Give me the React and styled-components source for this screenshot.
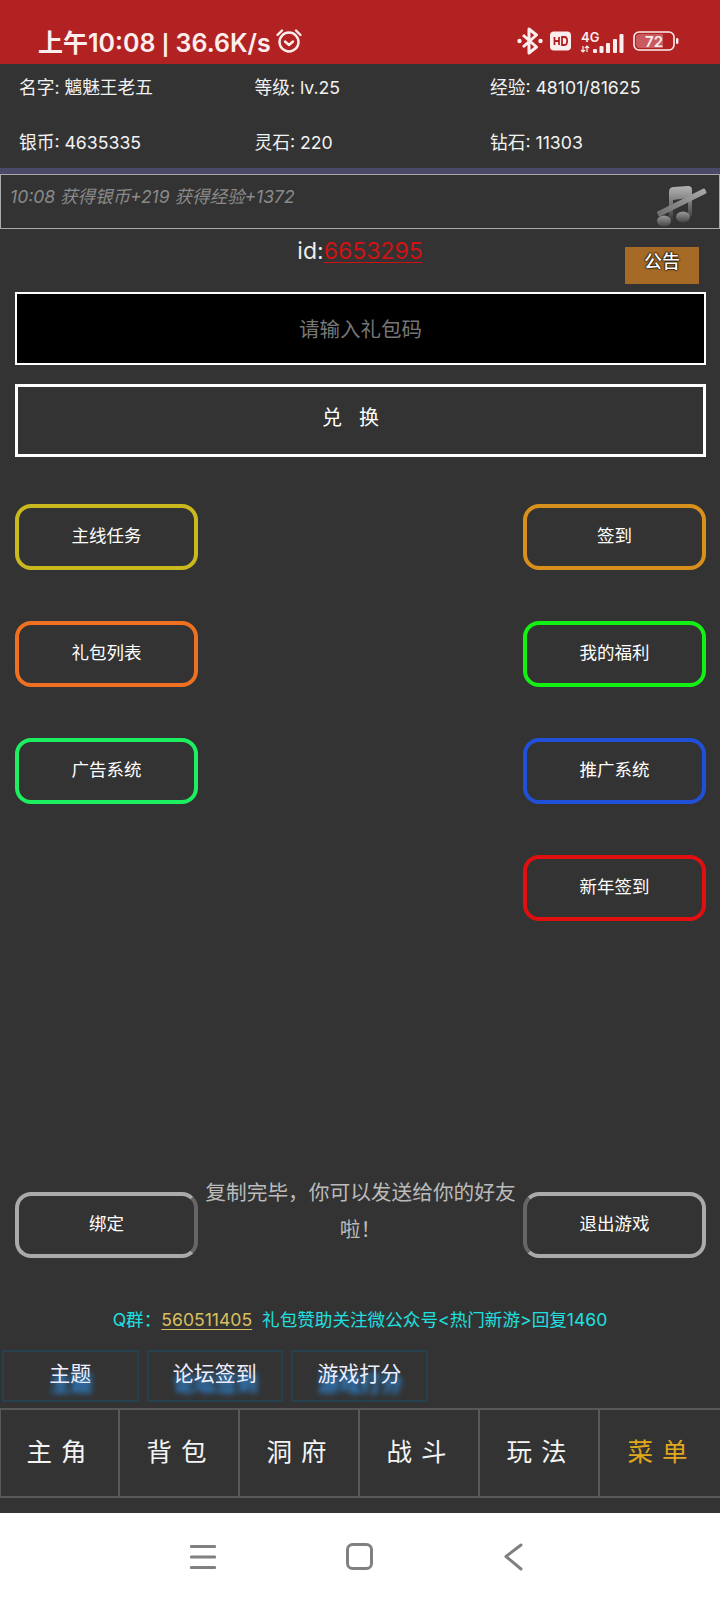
import React from 'react';
import styled, { createGlobalStyle } from 'styled-components';

const GlobalStyle = createGlobalStyle`
  html, body { margin: 0; padding: 0; background: #333; }
  * { box-sizing: border-box; }
  body { font-family: Inter, "Noto Sans CJK SC", sans-serif; }
`;

const Page = styled.div`
  width: 720px;
  height: 1600px;
  display: flex;
  flex-direction: column;
  background: #333;
  color: #fff;
  overflow: hidden;
`;

const StatusBar = styled.div`
  height: 64px;
  flex: none;
  background: #b22222;
  color: #fdeeee;
  display: flex;
  align-items: center;
  justify-content: space-between;
  padding: 18px 41px 0 38px;
`;

const StatusLeft = styled.div`
  display: flex;
  align-items: center;
  gap: 4px;
  font-size: 25px;
  font-weight: 600;
  white-space: pre;
`;

const StatusSep = styled.span`
  font-size: 20px;
  font-weight: 700;
`;

const StatusRight = styled.div`
  display: flex;
  align-items: center;
`;

const InfoGrid = styled.div`
  flex: none;
  height: 104px;
  display: grid;
  grid-template-columns: repeat(3, 235.5px);
  grid-auto-rows: 55px;
  padding: 0 0 0 19px;
  align-items: center;
  font-size: 17.7px;
  color: #f2f2f2;
`;

const InfoCell = styled.div`
  margin-top: -11px;
  white-space: nowrap;
`;

const Divider = styled.div`
  height: 6px;
  flex: none;
  background: #4a4a68;
`;

const LogBox = styled.div`
  flex: none;
  height: 55px;
  border: 1px solid #aaa;
  display: flex;
  align-items: flex-start;
  justify-content: space-between;
  padding: 8px 10px 0 9px;
  font-size: 17.5px;
  font-style: italic;
  color: #8a8a8a;
`;

const MusicSlot = styled.div`
  margin-top: 3px;
`;

const Notice = styled.div`
  position: relative;
  height: 63px;
  flex: none;
  padding-top: 7px;
  text-align: center;
  font-size: 23px;
  line-height: 30px;
  color: #eee;
`;

const NoticeId = styled.span`
  color: #d01212;
  text-decoration: underline;
  text-underline-offset: 3px;
  text-decoration-thickness: 1px;
`;

const NoticeBtn = styled.div`
  position: absolute;
  top: 18px;
  left: 625px;
  width: 74px;
  height: 37px;
  background: #a56a26;
  color: #fff;
  font-size: 18px;
  font-weight: 500;
  text-align: center;
  line-height: 30px;
  text-shadow: 0 0 2px #000, 0 0 2px #000, 0 0 1px #000;
`;

const CodeInput = styled.div`
  flex: none;
  height: 73px;
  margin: 0 14px 0 15px;
  padding-bottom: 2px;
  background: #000;
  border: 2px solid #fff;
  display: flex;
  align-items: center;
  justify-content: center;
  font-size: 20.5px;
  color: #777;
`;

const RedeemBtn = styled.div`
  flex: none;
  height: 73px;
  margin: 19px 14px 0 15px;
  padding: 0 20px 8px 0;
  border: 3px solid #fff;
  display: flex;
  align-items: center;
  justify-content: center;
  font-size: 20px;
  color: #fff;
  white-space: pre;
`;

const ActionGrid = styled.div`
  flex: none;
  display: grid;
  grid-template-columns: 183px 183px;
  justify-content: space-between;
  grid-auto-rows: 66px;
  row-gap: 51px;
  margin: 47px 14px 0 15px;
`;

const ActionBtn = styled.div`
  height: 66px;
  border: 4px solid ${p => p.$color};
  border-radius: 16px;
  padding-bottom: 5px;
  display: flex;
  align-items: center;
  justify-content: center;
  font-size: 17.5px;
  color: #fff;
  ${p => p.$right && 'grid-column: 2;'}
`;

const BottomRow = styled.div`
  flex: none;
  display: grid;
  grid-template-columns: 183px 1fr 183px;
  align-items: start;
  height: 72px;
  margin: 271px 14px 0 15px;
`;

const FadedBtn = styled(ActionBtn)`
  border-color: #aaa;
  ${p => (p.$side === 'left' ? 'border-right-color: #666;' : 'border-left-color: #666;')}
`;

const CopyMsg = styled.div`
  font-size: 20.7px;
  line-height: 37px;
  text-align: center;
  color: #bbb;
  padding: 0 3px;
  margin-top: -18px;
`;

const QLine = styled.div`
  flex: none;
  margin-top: 43px;
  height: 26px;
  font-size: 17.6px;
  line-height: 26px;
  text-align: center;
  color: #1ee0e0;
  white-space: pre;
`;

const QNum = styled.span`
  color: #d8c060;
  text-decoration: underline;
  text-underline-offset: 3px;
`;

const MiniTabs = styled.div`
  flex: none;
  display: flex;
  gap: 8px;
  margin-top: 17px;
  padding-left: 2px;
`;

const MiniTab = styled.div`
  width: 136.5px;
  height: 52px;
  border: 2px solid #26404f;
  display: flex;
  justify-content: center;
  padding-top: 8px;
  font-size: 21px;
  line-height: 28px;
  color: #eef;
  text-shadow: 1px 9px 5px #2f82cc, 1px 10px 7px #2f82cc;
`;

const NavBar = styled.div`
  flex: none;
  margin-top: 6px;
  height: 90px;
  display: grid;
  grid-template-columns: repeat(6, 120px);
  border-top: 2px solid #585858;
  border-bottom: 2px solid #585858;
`;

const NavCell = styled.div`
  display: flex;
  align-items: center;
  justify-content: center;
  font-size: 25.5px;
  letter-spacing: 9px;
  padding-left: 4px;
  padding-bottom: 8px;
  color: ${p => (p.$active ? '#e0a81c' : '#f4f4f4')};
  border-right: ${p => (p.$active ? 'none' : '2px solid #585858')};
  &:first-child {
    box-shadow: inset 1px 0 #585858;
  }
`;

const NavGap = styled.div`
  flex: none;
  height: 15px;
`;

const SysNav = styled.div`
  flex: 1;
  background: #fff;
  display: flex;
  align-items: center;
  padding-left: 190px;
  gap: 130px;
`;

const AlarmIcon = () => (
  <svg width="28" height="28" viewBox="0 0 28 28" fill="none" stroke="#fdeeee" strokeWidth="2.4" strokeLinecap="round" strokeLinejoin="round">
    <circle cx="14" cy="15" r="9.5" />
    <path d="M2.5 8 L7 3.5 M25.5 8 L21 3.5" />
    <path d="M10 14.5 L14 18 L18 14.5" />
  </svg>
);

const BluetoothIcon = () => (
  <svg width="26" height="28" viewBox="0 0 26 28" fill="none" style={{ marginRight: 7 }}>
    <path d="M6 8 L19.5 20 L12 26 V2 L19.5 8 L6 20" stroke="#fdeeee" strokeWidth="3" strokeLinejoin="round" />
    <circle cx="2.5" cy="14" r="2.2" fill="#fdeeee" />
    <circle cx="23.5" cy="14" r="2.2" fill="#fdeeee" />
  </svg>
);

const HdIcon = () => (
  <svg width="21" height="20" viewBox="0 0 21 20" style={{ marginRight: 9 }}>
    <rect width="21" height="19" y="0.5" rx="4" fill="#fdeeee" />
    <path d="M4.5 6 V14 M9 6 V14 M4.5 10 H9 M12 6 V14 H14.5 C18 14 18 6 14.5 6 Z" fill="none" stroke="#b22222" strokeWidth="1.8" />
  </svg>
);

const SignalIcon = () => (
  <svg width="44" height="26" viewBox="0 -4 44 26" style={{ marginRight: 9 }}>
    <text x="1" y="10" fontSize="13" fontWeight="600" fontFamily="Inter" fill="#fdeeee">4G</text>
    <path d="M3 14 V20 M1 18 L3 20 L5 18 M7 20 V14 M5 16 L7 14 L9 16" stroke="#fdeeee" strokeWidth="1.2" fill="none" />
    <rect x="13" y="17" width="4" height="4" rx="1" fill="#fdeeee" />
    <rect x="19.5" y="14" width="4" height="7" rx="1" fill="#fdeeee" />
    <rect x="26" y="11" width="4" height="10" rx="1" fill="#fdeeee" />
    <rect x="33" y="7" width="4" height="14" rx="1" fill="#fdeeee" />
    <rect x="39.5" y="2" width="4" height="19" rx="1" fill="#fdeeee" />
  </svg>
);

const BatteryIcon = () => (
  <svg width="46" height="20" viewBox="0 0 46 20">
    <rect x="1" y="1" width="40" height="18" rx="5" fill="none" stroke="#fdeeee" strokeWidth="1.6" />
    <path d="M3 7 a4 4 0 0 1 4 -4 H30 V17 H7 a4 4 0 0 1 -4 -4 Z" fill="#c95a60" />
    <text x="21" y="15.5" textAnchor="middle" fontSize="15" fontWeight="600" fontFamily="Inter" fill="#fdeeee">72</text>
    <rect x="43" y="7" width="2.4" height="6" rx="1.2" fill="#fdeeee" />
  </svg>
);

const MusicOffIcon = () => (
  <svg width="54" height="44" viewBox="0 0 54 44">
    <defs>
      <linearGradient id="noteFill" x1="0" y1="0" x2="0" y2="1">
        <stop offset="0" stopColor="#b4b4b4" />
        <stop offset="1" stopColor="#3a3a3a" />
      </linearGradient>
      <linearGradient id="headFill" x1="0" y1="0" x2="0" y2="1">
        <stop offset="0" stopColor="#9a9a9a" />
        <stop offset="1" stopColor="#444" />
      </linearGradient>
      <linearGradient id="slashFill" x1="0" y1="1" x2="1" y2="0">
        <stop offset="0" stopColor="#6e6e6e" />
        <stop offset="1" stopColor="#a8a8a8" />
      </linearGradient>
    </defs>
    <path d="M14 32 V6 Q14 1 19 1 L33 0 Q37 0 37 4 V30 H33 V12 L18 14 V34 Z" fill="url(#noteFill)" />
    <ellipse cx="9" cy="35" rx="7" ry="5.5" fill="url(#headFill)" />
    <ellipse cx="28" cy="31" rx="7" ry="5.5" fill="url(#headFill)" />
    <path d="M3 26.5 L49 3.5 L50.5 6.5 L4.5 29.5 Z" fill="url(#slashFill)" stroke="url(#slashFill)" strokeWidth="2" strokeLinejoin="round" />
  </svg>
);

const MenuIcon = () => (
  <svg width="26" height="26" viewBox="0 0 26 26" stroke="#808080" strokeWidth="3.2" strokeLinecap="round">
    <path d="M1.5 2.5 H24.5 M1.5 13 H24.5 M1.5 23.5 H24.5" />
  </svg>
);

const HomeIcon = () => (
  <svg width="28" height="28" viewBox="0 0 28 28" fill="none" stroke="#808080" strokeWidth="3">
    <rect x="1.5" y="1.5" width="24" height="24" rx="5" />
  </svg>
);

const BackIcon = () => (
  <svg width="20" height="28" viewBox="0 0 20 28" fill="none" stroke="#808080" strokeWidth="3" strokeLinecap="round" strokeLinejoin="round">
    <path d="M17 2 L2 13.5 L17 26" />
  </svg>
);

const info = [
  '名字: 魑魅王老五', '等级: lv.25', '经验: 48101/81625',
  '银币: 4635335', '灵石: 220', '钻石: 11303',
];

const actions = [
  { label: '主线任务', color: '#c9b81e' },
  { label: '签到', color: '#d8901c' },
  { label: '礼包列表', color: '#ee7020' },
  { label: '我的福利', color: '#14f014' },
  { label: '广告系统', color: '#1cf060' },
  { label: '推广系统', color: '#2050d8' },
  { label: '新年签到', color: '#e01010', right: true },
];

const tabs = ['主题', '论坛签到', '游戏打分'];

const navItems = ['主角', '背包', '洞府', '战斗', '玩法', '菜单'];

const App = () => (
  <Page>
    <GlobalStyle />
    <StatusBar>
      <StatusLeft>
        <span>上午10:08 <StatusSep>|</StatusSep> 36.6K/s</span>
        <AlarmIcon />
      </StatusLeft>
      <StatusRight>
        <BluetoothIcon />
        <HdIcon />
        <SignalIcon />
        <BatteryIcon />
      </StatusRight>
    </StatusBar>
    <InfoGrid>
      {info.map(text => (
        <InfoCell key={text}>{text}</InfoCell>
      ))}
    </InfoGrid>
    <Divider />
    <LogBox>
      10:08 获得银币+219 获得经验+1372
      <MusicSlot>
        <MusicOffIcon />
      </MusicSlot>
    </LogBox>
    <Notice>
      id:<NoticeId>6653295</NoticeId>
      <NoticeBtn>公告</NoticeBtn>
    </Notice>
    <CodeInput>请输入礼包码</CodeInput>
    <RedeemBtn>兑   换</RedeemBtn>
    <ActionGrid>
      {actions.map(a => (
        <ActionBtn key={a.label} $color={a.color} $right={a.right}>
          {a.label}
        </ActionBtn>
      ))}
    </ActionGrid>
    <BottomRow>
      <FadedBtn $color="#aaa" $side="left">绑定</FadedBtn>
      <CopyMsg>复制完毕，你可以发送给你的好友啦！</CopyMsg>
      <FadedBtn $color="#aaa" $side="right">退出游戏</FadedBtn>
    </BottomRow>
    <QLine>
      Q群：<QNum>560511405</QNum>  礼包赞助关注微公众号&lt;热门新游&gt;回复1460
    </QLine>
    <MiniTabs>
      {tabs.map(label => (
        <MiniTab key={label}>{label}</MiniTab>
      ))}
    </MiniTabs>
    <NavBar>
      {navItems.map((item, i) => (
        <NavCell key={item} $active={i === navItems.length - 1}>{item}</NavCell>
      ))}
    </NavBar>
    <NavGap />
    <SysNav>
      <MenuIcon />
      <HomeIcon />
      <BackIcon />
    </SysNav>
  </Page>
);

export default App;
